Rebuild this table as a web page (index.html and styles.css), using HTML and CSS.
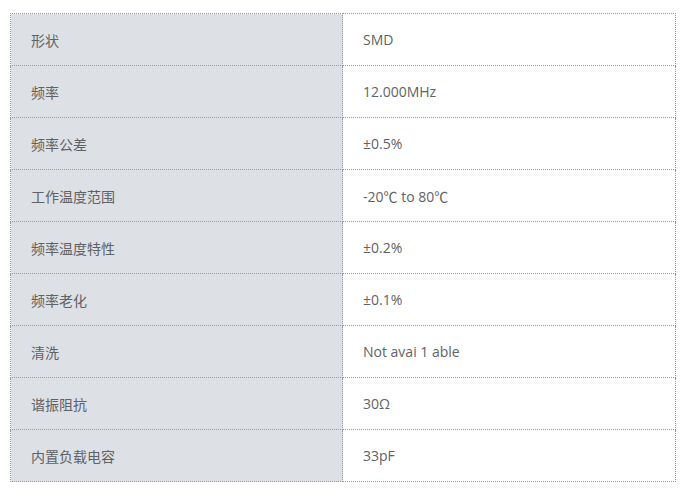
FILE: index.html
```html
<!DOCTYPE html>
<html lang="zh">
<head>
<meta charset="utf-8">
<link rel="stylesheet" href="styles.css">
</head>
<body>
<table class="spec">
  <tbody>
    <tr><td class="key">形状</td><td class="val">SMD</td></tr>
    <tr><td class="key">频率</td><td class="val">12.000MHz</td></tr>
    <tr><td class="key">频率公差</td><td class="val">±0.5%</td></tr>
    <tr><td class="key">工作温度范围</td><td class="val">-20℃ to 80℃</td></tr>
    <tr><td class="key">频率温度特性</td><td class="val">±0.2%</td></tr>
    <tr><td class="key">频率老化</td><td class="val">±0.1%</td></tr>
    <tr><td class="key">清洗</td><td class="val">Not avai 1 able</td></tr>
    <tr><td class="key">谐振阻抗</td><td class="val">30Ω</td></tr>
    <tr><td class="key">内置负载电容</td><td class="val">33pF</td></tr>
  </tbody>
</table>
</body>
</html>
```

FILE: styles.css
```css
html, body {
  margin: 0;
  padding: 0;
  background: #ffffff;
}
body {
  padding: 13px 0 0 10px;
  font-family: "Open Sans", "Noto Sans CJK SC", sans-serif;
  font-size: 14px;
  color: #5f6266;
}
.spec {
  border-collapse: collapse;
  width: 666px;
  table-layout: fixed;
}
.spec td {
  border: 1px dotted #9a9a9a;
  height: 52px;
  padding: 0 0 0 20px;
  vertical-align: middle;
  box-sizing: border-box;
}
.spec td.key {
  width: 332px;
  background: #dde0e4;
}
.spec td.val {
  background: #ffffff;
}
```
